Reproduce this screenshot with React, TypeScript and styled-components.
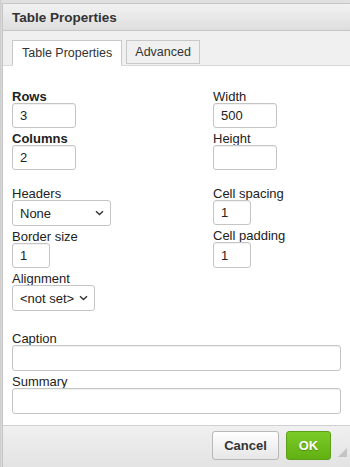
import * as React from "react";
import styled, { createGlobalStyle } from "styled-components";

const GlobalStyle = createGlobalStyle`
  html, body {
    margin: 0;
    padding: 0;
    background: #d6d6d6;
  }
  body {
    font-family: "Liberation Sans", Arial, sans-serif;
    font-size: 13px;
    color: #333;
  }
`;

const Backdrop = styled.div`
  width: 350px;
  height: 467px;
  padding: 3px 0 0 2px;
  box-sizing: border-box;
  overflow: hidden;
  background: linear-gradient(90deg, #c8c8c8 0, #e0e0e0 2px);
`;

const Dialog = styled.div`
  width: 360px;
  height: 480px;
  display: flex;
  flex-direction: column;
  background: #fff;
  border-left: 1px solid #c5c5c5;
  border-top: 1px solid #c5c5c5;
`;

const Header = styled.div`
  height: 26px;
  flex: none;
  display: flex;
  align-items: center;
  padding-left: 9px;
  font-size: 13.5px;
  font-weight: bold;
  color: #333;
  background: linear-gradient(#f2f2f2, #dedede);
  border-bottom: 1px solid #c5c5c5;
`;

const TabBar = styled.div`
  height: 34px;
  flex: none;
  display: flex;
  align-items: flex-end;
  gap: 4px;
  padding-left: 9px;
  background: #f0f0f0;
  border-bottom: 1px solid #d8d8d8;
`;

const Tab = styled.div<{ $active?: boolean }>`
  height: ${(p) => (p.$active ? "26px" : "24px")};
  margin-bottom: ${(p) => (p.$active ? "-1px" : "1px")};
  display: flex;
  align-items: center;
  padding: 0 ${(p) => (p.$active ? "9px" : "8px")};
  box-sizing: border-box;
  font-size: 12.5px;
  color: #333;
  background: ${(p) => (p.$active ? "#fff" : "#f0f0f0")};
  border: 1px solid #c8c8c8;
  border-bottom: ${(p) => (p.$active ? "1px solid #fff" : "1px solid #c8c8c8")};
`;

const Body = styled.div`
  width: 338px;
  padding: 25px 0 11px 9px;
  display: flex;
  flex-direction: column;
`;

const Columns = styled.div`
  display: flex;
`;

const Column = styled.div<{ $width?: number }>`
  width: ${(p) => (p.$width ? `${p.$width}px` : "auto")};
  display: flex;
  flex-direction: column;
`;

const Group = styled.div<{ $gap?: number }>`
  display: flex;
  flex-direction: column;
  gap: 5px;
  margin-top: ${(p) => p.$gap ?? 0}px;
`;

const Field = styled.div`
  display: flex;
  flex-direction: column;
`;

const Label = styled.div<{ $bold?: boolean }>`
  line-height: 12px;
  height: 12px;
  font-size: 13px;
  font-weight: ${(p) => (p.$bold ? "bold" : "normal")};
  color: #222;
  white-space: nowrap;
`;

const Input = styled.div<{ $w: number; $h?: number }>`
  width: ${(p) => p.$w}px;
  height: ${(p) => p.$h ?? 25}px;
  box-sizing: border-box;
  display: flex;
  align-items: center;
  padding-left: 7px;
  font-size: 13px;
  color: #222;
  background: #fff;
  border: 1px solid #c5c5c5;
  border-radius: 3px;
  box-shadow: inset 0 1px 1px rgba(0, 0, 0, 0.06);
`;

const Select = styled.div<{ $w: number }>`
  width: ${(p) => p.$w}px;
  height: 26px;
  box-sizing: border-box;
  display: flex;
  align-items: center;
  justify-content: space-between;
  padding: 0 6px 0 7px;
  font-size: 13px;
  color: #222;
  background: #fff;
  border: 1px solid #c5c5c5;
  border-radius: 3px;
`;

const Footer = styled.div`
  height: 38px;
  flex: none;
  display: flex;
  align-items: flex-start;
  padding: 5px 0 0 209px;
  gap: 7px;
  position: relative;
  background: linear-gradient(#f0f0f0, #e2e2e2);
  border-top: 1px solid #d0d0d0;
`;

const Button = styled.div<{ $primary?: boolean; $w: number }>`
  width: ${(p) => p.$w}px;
  height: 29px;
  box-sizing: border-box;
  display: flex;
  align-items: center;
  justify-content: center;
  font-size: 13px;
  font-weight: bold;
  color: ${(p) => (p.$primary ? "#fff" : "#333")};
  background: ${(p) =>
    p.$primary
      ? "linear-gradient(#7bcb28, #62b012)"
      : "linear-gradient(#ffffff, #e6e6e6)"};
  border: 1px solid ${(p) => (p.$primary ? "#5c9f19" : "#b8b8b8")};
  border-radius: 3px;
  text-shadow: ${(p) => (p.$primary ? "0 1px 1px rgba(0,0,0,0.25)" : "none")};
`;

const Grip = styled.div`
  position: absolute;
  left: 335px;
  top: 22px;
  width: 0;
  height: 0;
  border-left: 9px solid transparent;
  border-bottom: 9px solid #c4c4c4;
`;

const Chevron = () => (
  <svg width="9" height="6" viewBox="0 0 9 6">
    <path d="M1 1.2 L4.5 4.6 L8 1.2" fill="none" stroke="#333" strokeWidth="1.4" />
  </svg>
);

const App = () => (
  <>
    <GlobalStyle />
    <Backdrop>
      <Dialog>
        <Header>Table Properties</Header>
        <TabBar>
          <Tab $active>Table Properties</Tab>
          <Tab>Advanced</Tab>
        </TabBar>
        <Body>
          <Columns>
            <Column $width={201}>
              <Group>
                <Field>
                  <Label $bold>Rows</Label>
                  <Input $w={64}>3</Input>
                </Field>
                <Field>
                  <Label $bold>Columns</Label>
                  <Input $w={64}>2</Input>
                </Field>
              </Group>
              <Group $gap={18}>
                <Field>
                  <Label>Headers</Label>
                  <Select $w={99}>
                    None
                    <Chevron />
                  </Select>
                </Field>
                <Field>
                  <Label>Border size</Label>
                  <Input $w={38}>1</Input>
                </Field>
                <Field>
                  <Label>Alignment</Label>
                  <Select $w={83}>
                    {"<not set>"}
                    <Chevron />
                  </Select>
                </Field>
              </Group>
            </Column>
            <Column>
              <Group>
                <Field>
                  <Label>Width</Label>
                  <Input $w={64}>500</Input>
                </Field>
                <Field>
                  <Label>Height</Label>
                  <Input $w={64} />
                </Field>
              </Group>
              <Group $gap={18}>
                <Field>
                  <Label>Cell spacing</Label>
                  <Input $w={38}>1</Input>
                </Field>
                <Field>
                  <Label>Cell padding</Label>
                  <Input $w={38} $h={26}>1</Input>
                </Field>
              </Group>
            </Column>
          </Columns>
          <Group $gap={22}>
            <Field>
              <Label>Caption</Label>
              <Input $w={329} $h={26} />
            </Field>
            <Field>
              <Label>Summary</Label>
              <Input $w={329} $h={26} />
            </Field>
          </Group>
        </Body>
        <Footer>
          <Button $w={67}>Cancel</Button>
          <Button $primary $w={45}>
            OK
          </Button>
          <Grip />
        </Footer>
      </Dialog>
    </Backdrop>
  </>
);

export default App;
